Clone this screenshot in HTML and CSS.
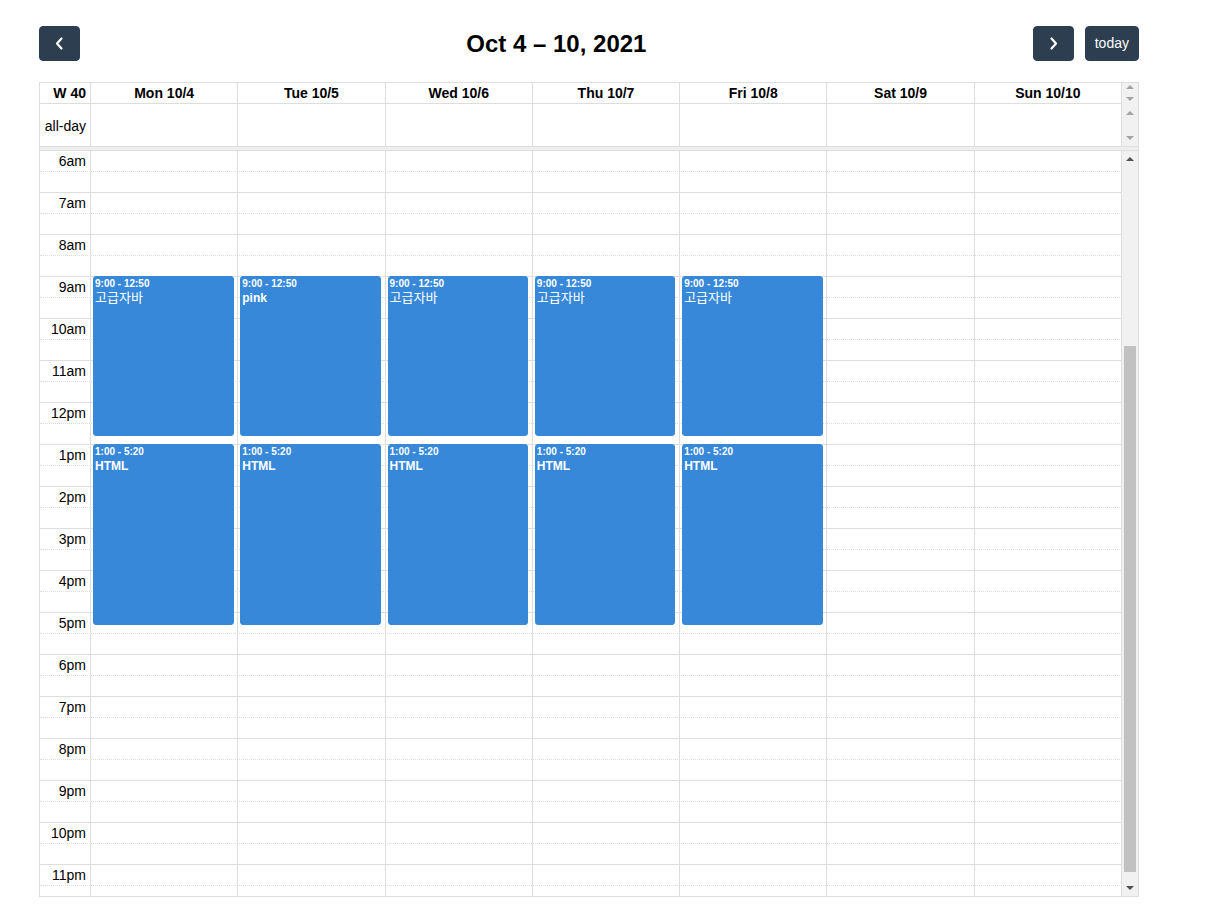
FILE: index.html
```html
<!DOCTYPE html>
<html lang="en">
<head>
<meta charset="utf-8">
<title>Calendar</title>
<link rel="stylesheet" href="styles.css">
</head>
<body>
<div class="cal">
  <div class="toolbar">
    <button class="btn btn-icon" aria-label="prev">
      <svg width="21" height="21" viewBox="0 0 21 21"><polyline points="12.5,5.5 8,10.5 12.5,15.5" fill="none" stroke="#fff" stroke-width="2.2" stroke-linecap="round" stroke-linejoin="round"/></svg>
    </button>
    <h2 class="title">Oct 4 – 10, 2021</h2>
    <div class="tb-right">
      <button class="btn btn-icon" aria-label="next">
        <svg width="21" height="21" viewBox="0 0 21 21"><polyline points="8.5,5.5 13,10.5 8.5,15.5" fill="none" stroke="#fff" stroke-width="2.2" stroke-linecap="round" stroke-linejoin="round"/></svg>
      </button>
      <button class="btn">today</button>
    </div>
  </div>

  <div class="view">
    <div class="head">
      <div class="head-grid">
        <div class="hcell axis">W 40</div>
        <div class="hcell">Mon 10/4</div>
        <div class="hcell">Tue 10/5</div>
        <div class="hcell">Wed 10/6</div>
        <div class="hcell">Thu 10/7</div>
        <div class="hcell">Fri 10/8</div>
        <div class="hcell">Sat 10/9</div>
        <div class="hcell">Sun 10/10</div>
        <div class="acell axis">all-day</div>
        <div class="acell"></div>
        <div class="acell"></div>
        <div class="acell"></div>
        <div class="acell"></div>
        <div class="acell"></div>
        <div class="acell"></div>
        <div class="acell"></div>
      </div>
      <div class="sb sb-head">
        <div class="sb-seg seg-h"><span class="tri up light"></span><span class="tri down light"></span></div>
        <div class="sb-seg seg-a"><span class="tri up light"></span><span class="tri down light"></span></div>
      </div>
    </div>

    <div class="divider"></div>

    <div class="body">
      <div class="body-grid">
        <div class="slots">
          <div class="slot"><div class="lbl">6am</div></div><div class="slot half"><div class="lbl"></div></div>
          <div class="slot"><div class="lbl">7am</div></div><div class="slot half"><div class="lbl"></div></div>
          <div class="slot"><div class="lbl">8am</div></div><div class="slot half"><div class="lbl"></div></div>
          <div class="slot"><div class="lbl">9am</div></div><div class="slot half"><div class="lbl"></div></div>
          <div class="slot"><div class="lbl">10am</div></div><div class="slot half"><div class="lbl"></div></div>
          <div class="slot"><div class="lbl">11am</div></div><div class="slot half"><div class="lbl"></div></div>
          <div class="slot"><div class="lbl">12pm</div></div><div class="slot half"><div class="lbl"></div></div>
          <div class="slot"><div class="lbl">1pm</div></div><div class="slot half"><div class="lbl"></div></div>
          <div class="slot"><div class="lbl">2pm</div></div><div class="slot half"><div class="lbl"></div></div>
          <div class="slot"><div class="lbl">3pm</div></div><div class="slot half"><div class="lbl"></div></div>
          <div class="slot"><div class="lbl">4pm</div></div><div class="slot half"><div class="lbl"></div></div>
          <div class="slot"><div class="lbl">5pm</div></div><div class="slot half"><div class="lbl"></div></div>
          <div class="slot"><div class="lbl">6pm</div></div><div class="slot half"><div class="lbl"></div></div>
          <div class="slot"><div class="lbl">7pm</div></div><div class="slot half"><div class="lbl"></div></div>
          <div class="slot"><div class="lbl">8pm</div></div><div class="slot half"><div class="lbl"></div></div>
          <div class="slot"><div class="lbl">9pm</div></div><div class="slot half"><div class="lbl"></div></div>
          <div class="slot"><div class="lbl">10pm</div></div><div class="slot half"><div class="lbl"></div></div>
          <div class="slot"><div class="lbl">11pm</div></div><div class="slot half"><div class="lbl"></div></div>
        </div>

        <div class="col c1">
          <div class="ev" style="top:125px;height:160px"><div class="ev-time">9:00 - 12:50</div><div class="ev-title" lang="ko">고급자바</div></div>
          <div class="ev" style="top:293px;height:181px"><div class="ev-time">1:00 - 5:20</div><div class="ev-title">HTML</div></div>
        </div>
        <div class="col c2">
          <div class="ev" style="top:125px;height:160px"><div class="ev-time">9:00 - 12:50</div><div class="ev-title">pink</div></div>
          <div class="ev" style="top:293px;height:181px"><div class="ev-time">1:00 - 5:20</div><div class="ev-title">HTML</div></div>
        </div>
        <div class="col c3">
          <div class="ev" style="top:125px;height:160px"><div class="ev-time">9:00 - 12:50</div><div class="ev-title" lang="ko">고급자바</div></div>
          <div class="ev" style="top:293px;height:181px"><div class="ev-time">1:00 - 5:20</div><div class="ev-title">HTML</div></div>
        </div>
        <div class="col c4">
          <div class="ev" style="top:125px;height:160px"><div class="ev-time">9:00 - 12:50</div><div class="ev-title" lang="ko">고급자바</div></div>
          <div class="ev" style="top:293px;height:181px"><div class="ev-time">1:00 - 5:20</div><div class="ev-title">HTML</div></div>
        </div>
        <div class="col c5">
          <div class="ev" style="top:125px;height:160px"><div class="ev-time">9:00 - 12:50</div><div class="ev-title" lang="ko">고급자바</div></div>
          <div class="ev" style="top:293px;height:181px"><div class="ev-time">1:00 - 5:20</div><div class="ev-title">HTML</div></div>
        </div>
        <div class="col c6"></div>
        <div class="col c7"></div>
      </div>
      <div class="sb sb-body">
        <div class="sb-btn"><span class="tri up dark"></span></div>
        <div class="track"><div class="thumb"></div></div>
        <div class="sb-btn"><span class="tri down dark"></span></div>
      </div>
    </div>
  </div>
</div>
</body>
</html>
```

FILE: styles.css
```css
* { box-sizing: border-box; }

body {
  margin: 0;
  background: #fff;
  font-family: "Liberation Sans", Arial, "Noto Sans CJK KR", sans-serif;
  font-size: 14px;
  color: #000;
}

.cal {
  width: 1100px;
  margin: 26px 0 0 39px;
}

/* toolbar */
.toolbar {
  display: flex;
  justify-content: space-between;
  align-items: center;
  margin-bottom: 21px;
}

.title {
  margin: 0;
  font-size: 24px;
  font-weight: bold;
  line-height: 28px;
}

.tb-right {
  display: flex;
  gap: 11px;
}

.btn {
  height: 35px;
  padding: 0 9px;
  border: 1px solid #2c3e50;
  border-radius: 4px;
  background: #2c3e50;
  color: #fff;
  font-family: "Liberation Sans", Arial, sans-serif;
  font-size: 14px;
  line-height: 21px;
  display: flex;
  align-items: center;
  justify-content: center;
}

.btn-icon {
  width: 41px;
  padding: 0;
}

.btn-icon svg { display: block; }

/* view */
.view {
  border: 1px solid #ddd;
}

.head {
  display: flex;
}

.head-grid {
  flex: 1;
  display: grid;
  grid-template-columns: 51px repeat(7, minmax(0, 1fr));
  grid-template-rows: 21px 42px;
}

.hcell {
  border-right: 1px solid #ddd;
  border-bottom: 1px solid #ddd;
  font-weight: bold;
  text-align: center;
  padding: 0 4px;
  line-height: 20px;
  white-space: nowrap;
}

.hcell.axis { text-align: right; }

.acell {
  border-right: 1px solid #ddd;
}

.acell.axis {
  display: flex;
  align-items: center;
  justify-content: flex-end;
  padding: 2px 4px 0;
}

/* scrollbars */
.sb {
  width: 16px;
  background: #f1f1f1;
  display: flex;
  flex-direction: column;
}

.sb-seg {
  display: flex;
  flex-direction: column;
  align-items: center;
  justify-content: space-between;
}

.seg-h {
  height: 21px;
  padding: 2px 0 3px;
}

.seg-a {
  height: 42px;
  padding: 7px 0 6px;
}

.tri {
  display: block;
  width: 0;
  height: 0;
  border-left: 4px solid transparent;
  border-right: 4px solid transparent;
}

.tri.up.light { border-bottom: 4px solid #a3a3a3; }
.tri.down.light { border-top: 4px solid #a3a3a3; }
.tri.up.dark { border-bottom: 4px solid #505050; }
.tri.down.dark { border-top: 4px solid #505050; }

.divider {
  height: 5px;
  background: #eee;
  border-top: 1px solid #ddd;
  border-bottom: 1px solid #ddd;
}

.body {
  display: flex;
  height: 745px;
}

.body-grid {
  flex: 1;
  display: grid;
  grid-template-columns: 51px repeat(7, minmax(0, 1fr));
  grid-template-rows: auto;
  overflow: hidden;
  height: 745px;
  align-items: start;
}

.slots {
  grid-column: 1 / -1;
  grid-row: 1;
}

.slot {
  height: 21px;
  border-bottom: 1px dotted #ddd;
  display: flex;
}

.slot.half {
  border-bottom: 1px solid #ddd;
}

.lbl {
  width: 51px;
  flex: none;
  border-right: 1px solid #ddd;
  text-align: right;
  padding: 0 4px;
  line-height: 20px;
  white-space: nowrap;
}

.col {
  grid-row: 1;
  align-self: stretch;
  position: relative;
  border-right: 1px solid #ddd;
}

.c1 { grid-column: 2; }
.c2 { grid-column: 3; }
.c3 { grid-column: 4; }
.c4 { grid-column: 5; }
.c5 { grid-column: 6; }
.c6 { grid-column: 7; }
.c7 { grid-column: 8; }

.ev {
  position: absolute;
  left: 2px;
  right: 2.5%;
  background: #3788d8;
  border: 1px solid #3788d8;
  border-radius: 3px;
  color: #fff;
  padding: 1px;
  overflow: hidden;
}

.ev-time {
  font-size: 10px;
  font-weight: bold;
  line-height: 12px;
  margin-bottom: 1px;
  white-space: nowrap;
}

.ev-title {
  font-size: 12px;
  font-weight: bold;
  line-height: 14px;
  font-family: "Liberation Sans", Arial, "Noto Sans CJK KR", sans-serif;
}

.ev-title:lang(ko) {
  font-weight: normal;
  font-size: 13px;
}

.sb-btn {
  height: 16px;
  flex: none;
  display: flex;
  align-items: center;
  justify-content: center;
}

.track {
  flex: 1;
  padding: 179px 2px 8px;
  display: flex;
  flex-direction: column;
}

.thumb {
  flex: 1;
  background: #c1c1c1;
}
```
